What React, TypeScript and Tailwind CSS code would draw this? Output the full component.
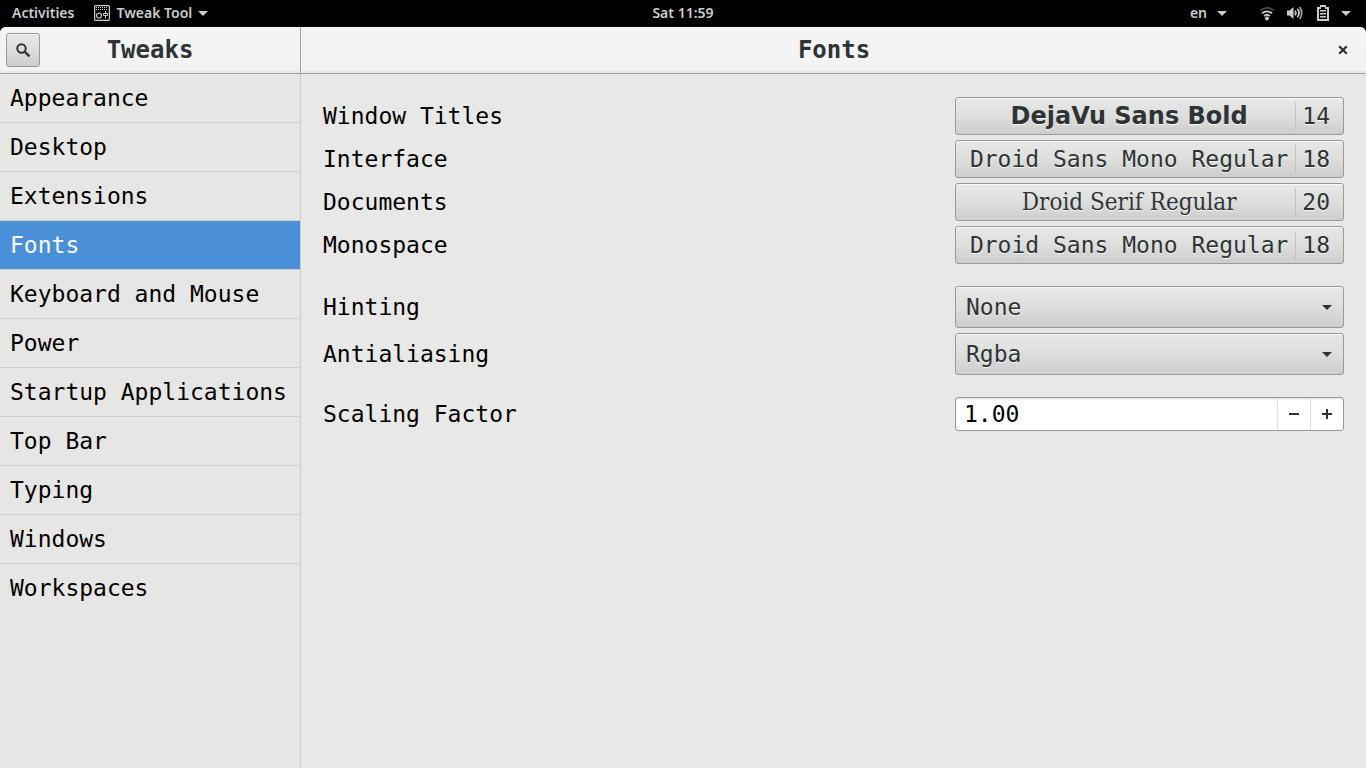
import { useState } from "react";

const sections = [
  "Appearance",
  "Desktop",
  "Extensions",
  "Fonts",
  "Keyboard and Mouse",
  "Power",
  "Startup Applications",
  "Top Bar",
  "Typing",
  "Windows",
  "Workspaces",
];

const fontRows = [
  { label: "Window Titles", font: "DejaVu Sans Bold", size: 14, face: "font-['DejaVu_Sans',sans-serif] text-2xl font-bold" },
  { label: "Interface", font: "Droid Sans Mono Regular", size: 18, face: "" },
  { label: "Documents", font: "Droid Serif Regular", size: 20, face: "font-['DejaVu_Serif_Condensed','DejaVu_Serif',serif] text-2xl" },
  { label: "Monospace", font: "Droid Sans Mono Regular", size: 18, face: "" },
];

const selectRows = [
  { id: "hinting", label: "Hinting", options: ["None", "Slight", "Medium", "Full"] },
  { id: "antialiasing", label: "Antialiasing", options: ["Rgba", "Grayscale", "None"] },
];

const raised =
  "rounded-[3px] border border-[#999b98] bg-linear-to-b from-[#e8e8e7] via-[#dededd] to-[#cdcdcb] text-[#2e3436] shadow-[inset_0_1px_#f8f8f8] [text-shadow:0_1px_rgba(255,255,255,0.8)]";

function Caret() {
  return (
    <svg viewBox="0 0 10 5" className="h-[5px] w-[10px] shrink-0" fill="currentColor" aria-hidden="true">
      <path d="M0 0h10L5 5z" />
    </svg>
  );
}

function TweakIcon() {
  return (
    <svg viewBox="0 0 16 16" className="size-4" fill="none" stroke="currentColor" aria-hidden="true">
      <rect x=".6" y=".6" width="14.8" height="14.8" rx="1.2" strokeWidth="1.2" />
      <path d="M2 2.5h12M2 4.5h12" strokeDasharray="1 1" />
      <circle cx="5" cy="10.5" r="2.5" strokeWidth="1.200" />
      <path d="M11.500 6v2M11.500 10.500v3M9.500 8.500h4v2h-4z" />
    </svg>
  );
}

function WifiIcon() {
  return (
    <svg viewBox="0 0 16 16" className="size-4" fill="none" stroke="currentColor" strokeWidth="1.8" aria-hidden="true">
      <path d="M1.2 5.700C5 2 11 2 14.800 5.700" opacity=".35" />
      <path d="M3 8.400c2.900-2.700 7.100-2.700 10 0" />
      <path d="M5.2 11c1.600-1.500 4-1.500 5.600 0" />
      <circle cx="8" cy="13.500" r="2" fill="currentColor" stroke="none" />
    </svg>
  );
}

function VolumeIcon() {
  return (
    <svg viewBox="0 0 16 16" className="size-4" fill="none" stroke="currentColor" strokeWidth="1.7" aria-hidden="true">
      <path d="M0 5.500h2.500L6.500 2v12l-4-3.500H0z" fill="currentColor" stroke="none" />
      <path d="M8 5.700c1.100 1.400 1.100 3.200 0 4.600" />
      <path d="M10.300 3.800c2.200 2.500 2.200 5.900 0 8.400" />
      <path d="M12.500 2c3 3.500 3 8.500 0 12" opacity=".8" />
    </svg>
  );
}

function BatteryIcon() {
  return (
    <svg viewBox="0 0 12 16" className="h-4 w-3" fill="currentColor" aria-hidden="true">
      <path fillRule="evenodd" d="M3 0h6v2h3v14H0V2h3zM2 4v10h8V4H8V2H4v2z" />
      <path d="M3 5h6v1.500H3zM3 8h6v1.500H3zM3 11h6v1.500H3z" />
    </svg>
  );
}

function TopBar() {
  return (
    <header className="grid h-[27px] shrink-0 grid-cols-3 items-center bg-black px-3 pb-px font-['Noto_Sans','Noto_Sans_CJK_SC',sans-serif] text-sm leading-5 font-semibold text-[#cccccc]">
      <div className="flex items-center gap-5">
        <button type="button">Activities</button>
        <button type="button" className="flex items-center gap-1.5">
          <TweakIcon />
          <span>Tweak Tool</span>
          <Caret />
        </button>
      </div>
      <button type="button" className="justify-self-center">Sat 11:59</button>
      <div className="flex items-center justify-end gap-8 pr-[3px]">
        <button type="button" className="flex items-center gap-2.5">
          <span>en</span>
          <Caret />
        </button>
        <button type="button" className="flex items-center gap-3.5" aria-label="System menu">
          <span className="flex items-center gap-3">
            <WifiIcon />
            <VolumeIcon />
          </span>
          <span className="flex items-center gap-3">
            <BatteryIcon />
            <Caret />
          </span>
        </button>
      </div>
    </header>
  );
}

export default function App() {
  const [active, setActive] = useState("Fonts");
  const [scale, setScale] = useState("1.00");
  const step = (by: number) => setScale((v) => ((parseFloat(v) || 0) + by).toFixed(2));

  return (
    <div className="flex min-h-screen flex-col bg-black font-['DejaVu_Sans_Mono',monospace] text-[23px] leading-7 text-black">
      <TopBar />
      <div className="flex flex-1 flex-col overflow-hidden rounded-t-md bg-[#e8e8e6]">
        <div className="flex h-[47px] shrink-0 border-b border-[#a1a1a0] bg-linear-to-b from-[#f5f5f5] to-[#f2f2f2] text-2xl font-bold text-[#2e3436] shadow-[inset_0_-2px_#e9e9e8]">
          <div className="flex w-[301px] shrink-0 items-center border-r border-[#a1a1a0] px-1.5">
            <button type="button" aria-label="Search" className={`flex size-[34px] items-center justify-center ${raised}`}>
              <svg viewBox="0 0 16 16" className="size-4" fill="none" stroke="currentColor" strokeWidth="2" aria-hidden="true">
                <circle cx="6.500" cy="6.500" r="4.200" />
                <path d="M9.600 9.600l4.900 4.700" strokeWidth="2.300" />
              </svg>
            </button>
            <h1 className="flex-1 pr-[34px] text-center">Tweaks</h1>
          </div>
          <div className="flex flex-1 items-center pr-[15px]">
            <h2 className="flex-1 pl-8 text-center">Fonts</h2>
            <button type="button" aria-label="Close" className="flex size-4 items-center justify-center">
              <svg viewBox="0 0 10 10" className="size-2.5" fill="none" stroke="currentColor" strokeWidth="2.200" aria-hidden="true">
                <path d="M1.200 1.200l7.600 7.600M8.800 1.200L1.200 8.800" />
              </svg>
            </button>
          </div>
        </div>
        <div className="flex flex-1">
          <nav className="w-[301px] shrink-0 border-r border-[#cfcfcd] bg-[#e6e6e4]">
            <ul>
              {sections.map((name, i) => (
                <li key={name} className={i < sections.length - 1 ? "border-b border-[#cfcfcd]" : ""}>
                  <button
                    type="button"
                    onClick={() => setActive(name)}
                    className={`h-12 w-full px-2.5 text-left whitespace-nowrap ${active === name ? "bg-[#4a90d9] text-white" : ""}`}
                  >
                    {name}
                  </button>
                </li>
              ))}
            </ul>
          </nav>
          <main className="flex flex-1 flex-col gap-[22px] px-[22px] pt-[23px]">
            <div className="flex flex-col gap-[5px]">
              {fontRows.map((row) => (
                <div key={row.label} className="flex items-center justify-between">
                  <label htmlFor={row.label}>{row.label}</label>
                  <button id={row.label} type="button" className={`flex h-[38px] w-[389px] items-center px-[7px] ${raised}`}>
                    <span className={`flex-1 text-center whitespace-nowrap ${row.face}`}>{row.font}</span>
                    <span className="border-l border-[#c2c2c0] px-1.5">{row.size}</span>
                  </button>
                </div>
              ))}
            </div>
            <div className="flex flex-col gap-[5px]">
              {selectRows.map((row) => (
                <div key={row.id} className="flex items-center justify-between">
                  <label htmlFor={row.id}>{row.label}</label>
                  <div className="relative w-[389px]">
                    <select id={row.id} className={`block h-[42px] w-full appearance-none px-2.5 ${raised}`}>
                      {row.options.map((o) => (
                        <option key={o}>{o}</option>
                      ))}
                    </select>
                    <span className="pointer-events-none absolute inset-y-0 right-3 flex items-center text-[#2e3436]">
                      <Caret />
                    </span>
                  </div>
                </div>
              ))}
            </div>
            <div className="flex items-center justify-between">
              <label htmlFor="scaling">Scaling Factor</label>
              <div className="flex h-[34px] w-[389px] overflow-hidden rounded-[3px] border border-[#999b98] bg-white text-[#2e3436] shadow-[inset_0_1px_2px_#dcdcdc]">
                <input
                  id="scaling"
                  type="text"
                  value={scale}
                  onChange={(e) => setScale(e.target.value)}
                  className="min-w-0 flex-1 bg-transparent px-2 text-black outline-none"
                />
                <button type="button" aria-label="Decrease" onClick={() => step(-0.01)} className="flex w-[33px] items-center justify-center border-l border-[#dcdcdb]">
                  <svg viewBox="0 0 10 10" className="size-2.5" aria-hidden="true">
                    <path d="M0 4h10v2H0z" fill="currentColor" />
                  </svg>
                </button>
                <button type="button" aria-label="Increase" onClick={() => step(0.01)} className="flex w-[33px] items-center justify-center border-l border-[#dcdcdb]">
                  <svg viewBox="0 0 10 10" className="size-2.5" aria-hidden="true">
                    <path d="M0 4h4V0h2v4h4v2H6v4H4V6H0z" fill="currentColor" />
                  </svg>
                </button>
              </div>
            </div>
          </main>
        </div>
      </div>
    </div>
  );
}
